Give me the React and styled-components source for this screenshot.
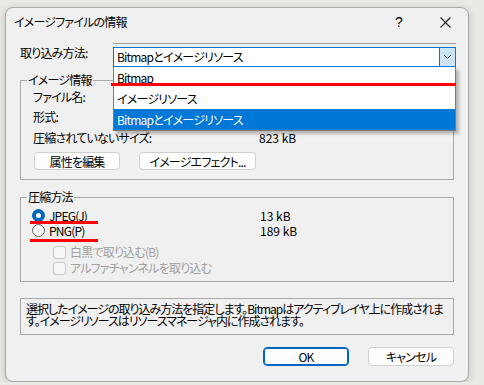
import React from "react";
import styled, { createGlobalStyle } from "styled-components";

const Global = createGlobalStyle`
  html, body { margin: 0; padding: 0; }
  body {
    background: #e9e9e5;
    font-family: "Noto Sans CJK JP", "Noto Sans", sans-serif;
    font-size: 12px;
    letter-spacing: -0.8px;
    color: #000;
    font-feature-settings: "palt";
  }
`;

const Dialog = styled.div`
  margin: 7px 0 0 5px;
  width: 462px;
  height: 373px;
  background: #f0f0f0;
  border: 1px solid #a8a8a8;
  border-radius: 8px;
  box-shadow: 0 2px 8px rgba(0, 0, 0, 0.18);
  display: flex;
  flex-direction: column;
`;

const TitleBar = styled.div`
  height: 28px;
  display: flex;
  align-items: center;
  padding-left: 8px;
`;

const Title = styled.div`
  flex: 1;
  line-height: 28px;
`;

const CaptionButton = styled.div`
  width: 46px;
  height: 28px;
  display: flex;
  align-items: center;
  justify-content: center;
  font-family: "Liberation Sans", sans-serif;
  font-size: 14px;
  letter-spacing: 0;
`;

const Body = styled.div`
  padding: 7px 14px 0 14px;
  display: flex;
  flex-direction: column;
`;

const MethodRow = styled.div`
  display: flex;
  align-items: flex-start;
  position: relative;
  z-index: 2;
`;

const RowLabel = styled.div`
  width: 93px;
  line-height: 20px;
`;

const ComboArea = styled.div`
  width: 343px;
  margin-right: -2px;
  border-top: 1px solid #a0a0a0;
  padding-top: 3px;
`;

const Combo = styled.div`
  position: relative;
  height: 18px;
  border: 1px solid #0078d7;
  background: #fff;
  display: flex;
  align-items: center;
`;

const ComboText = styled.div`
  flex: 1;
  padding-left: 3px;
  line-height: 18px;
`;

const ArrowButton = styled.div`
  width: 15px;
  height: 18px;
  background: #cce4f7;
  border-left: 1px solid #0078d7;
  display: flex;
  align-items: center;
  justify-content: center;
`;

const DropList = styled.div`
  position: absolute;
  top: 100%;
  left: -1px;
  right: -1px;
  margin-top: 1px;
  background: #fff;
  border: 1px solid #7a7a7a;
  border-top: none;
  box-shadow: 3px 3px 3px rgba(0, 0, 0, 0.25);
`;

const DropItem = styled.div`
  position: relative;
  height: 21px;
  line-height: 21px;
  padding-left: 3px;
  background: ${(p) => (p.$selected ? "#0078d7" : "#fff")};
  color: ${(p) => (p.$selected ? "#fff" : "#000")};
`;

const RedMark = styled.div`
  position: absolute;
  left: ${(p) => p.$left}px;
  top: ${(p) => p.$top}px;
  width: ${(p) => p.$width};
  height: 3px;
  background: #ff0000;
`;

const Group = styled.fieldset`
  margin: ${(p) => p.$mt}px 0 0 0;
  padding: 0;
  border: 1px solid #a9a9a9;
  min-width: 0;
`;

const Legend = styled.legend`
  margin-left: 6px;
  padding: 0 1px;
  line-height: 14px;
`;

const GroupContent = styled.div`
  padding: ${(p) => p.$pad};
  display: flex;
  flex-direction: column;
`;

const InfoRow = styled.div`
  display: flex;
  height: 20px;
  line-height: 20px;
  margin-top: ${(p) => p.$mt || 0}px;
`;

const InfoLabel = styled.div`
  width: 226px;
`;

const Value = styled.div`
  letter-spacing: 0;
`;

const ButtonRow = styled.div`
  display: flex;
  gap: 19px;
  margin: 4px 0 0 1px;
`;

const Button = styled.div`
  box-sizing: border-box;
  width: ${(p) => p.$w}px;
  height: ${(p) => p.$h || 18}px;
  display: flex;
  align-items: center;
  justify-content: center;
  background: #fdfdfd;
  border: 1px solid ${(p) => (p.$primary ? "#0067c0" : "#d0d0d0")};
  box-shadow: ${(p) => (p.$primary ? "inset 0 0 0 1px #0067c0" : "none")};
  border-radius: 4px;
`;

const OptionRow = styled.div`
  position: relative;
  display: flex;
  align-items: center;
  height: ${(p) => p.$h}px;
  margin-top: ${(p) => p.$mt || 0}px;
  padding-left: ${(p) => p.$indent || 0}px;
  color: ${(p) => (p.$disabled ? "#a0a0a0" : "#000")};
`;

const Radio = styled.div`
  box-sizing: border-box;
  width: 13px;
  height: 13px;
  border-radius: 50%;
  background: ${(p) => (p.$checked ? "#0067c0" : "#f7f7f7")};
  border: 1px solid ${(p) => (p.$checked ? "#0067c0" : "#5e5e5e")};
  display: flex;
  align-items: center;
  justify-content: center;
  margin-right: 4px;
  &::after {
    content: "";
    display: ${(p) => (p.$checked ? "block" : "none")};
    width: 5px;
    height: 5px;
    border-radius: 50%;
    background: #fff;
  }
`;

const OptionLabel = styled.div`
  width: ${(p) => p.$w || "auto"};
  line-height: 14px;
`;

const Check = styled.div`
  box-sizing: border-box;
  width: 13px;
  height: 13px;
  border: 1px solid #c6c6c6;
  border-radius: 3px;
  background: #f7f7f7;
  margin-right: 4px;
`;

const Description = styled.div`
  margin-top: 16px;
  height: 37px;
  box-sizing: border-box;
  border: 1px solid #a9a9a9;
  padding: 4px 0 0 5px;
  line-height: 12px;
  letter-spacing: -1px;
`;

const DescLine = styled.div`
  white-space: nowrap;
`;

const Footer = styled.div`
  display: flex;
  justify-content: flex-end;
  gap: 19px;
  margin-top: 12px;
`;

function Chevron() {
  return (
    <svg width="9" height="6" viewBox="0 0 9 6">
      <path d="M1 1 L4.5 4.5 L8 1" fill="none" stroke="#555" strokeWidth="1" />
    </svg>
  );
}

function CloseIcon() {
  return (
    <svg width="11" height="11" viewBox="0 0 11 11">
      <path d="M0.5 0.5 L10.5 10.5 M10.5 0.5 L0.5 10.5" stroke="#222" strokeWidth="1.1" />
    </svg>
  );
}

export default function App() {
  return (
    <>
      <Global />
      <Dialog>
        <TitleBar>
          <Title>イメージファイルの情報</Title>
          <CaptionButton>?</CaptionButton>
          <CaptionButton>
            <CloseIcon />
          </CaptionButton>
        </TitleBar>
        <Body>
          <MethodRow>
            <RowLabel>取り込み方法:</RowLabel>
            <ComboArea>
              <Combo>
                <ComboText>Bitmapとイメージリソース</ComboText>
                <ArrowButton>
                  <Chevron />
                </ArrowButton>
                <DropList>
                  <DropItem>
                    Bitmap
                    <RedMark $left={-3} $top={16} $width="calc(100% + 4px)" />
                  </DropItem>
                  <DropItem>イメージリソース</DropItem>
                  <DropItem $selected>Bitmapとイメージリソース</DropItem>
                </DropList>
              </Combo>
            </ComboArea>
          </MethodRow>

          <Group $mt={6}>
            <Legend>イメージ情報</Legend>
            <GroupContent $pad="0 0 9px 12px">
              <InfoRow>
                <InfoLabel>ファイル名:</InfoLabel>
              </InfoRow>
              <InfoRow>
                <InfoLabel>形式:</InfoLabel>
              </InfoRow>
              <InfoRow $mt={1}>
                <InfoLabel>圧縮されていないサイズ:</InfoLabel>
                <Value>823 kB</Value>
              </InfoRow>
              <ButtonRow>
                <Button $w={86}>属性を編集</Button>
                <Button $w={117}>イメージエフェクト...</Button>
              </ButtonRow>
            </GroupContent>
          </Group>

          <Group $mt={10}>
            <Legend>圧縮方法</Legend>
            <GroupContent $pad="4px 0 5px 11px">
              <OptionRow $h={15}>
                <Radio $checked />
                <OptionLabel $w="211px">JPEG(J)</OptionLabel>
                <Value>13 kB</Value>
                <RedMark $left={-2} $top={13} $width="68px" />
              </OptionRow>
              <OptionRow $h={15}>
                <Radio />
                <OptionLabel $w="211px">PNG(P)</OptionLabel>
                <Value>189 kB</Value>
                <RedMark $left={-2} $top={16} $width="68px" />
              </OptionRow>
              <OptionRow $h={16} $mt={6} $indent={21} $disabled>
                <Check />
                <OptionLabel>白黒で取り込む(B)</OptionLabel>
              </OptionRow>
              <OptionRow $h={16} $indent={21} $disabled>
                <Check />
                <OptionLabel>アルファチャンネルを取り込む</OptionLabel>
              </OptionRow>
            </GroupContent>
          </Group>

          <Description>
            <DescLine>
              選択したイメージの取り込み方法を指定します。Bitmapはアクティブレイヤ上に作成されま
            </DescLine>
            <DescLine>す。イメージリソースはリソースマネージャ内に作成されます。</DescLine>
          </Description>

          <Footer>
            <Button $w={86} $h={19} $primary>
              OK
            </Button>
            <Button $w={86} $h={19}>
              キャンセル
            </Button>
          </Footer>
        </Body>
      </Dialog>
    </>
  );
}
